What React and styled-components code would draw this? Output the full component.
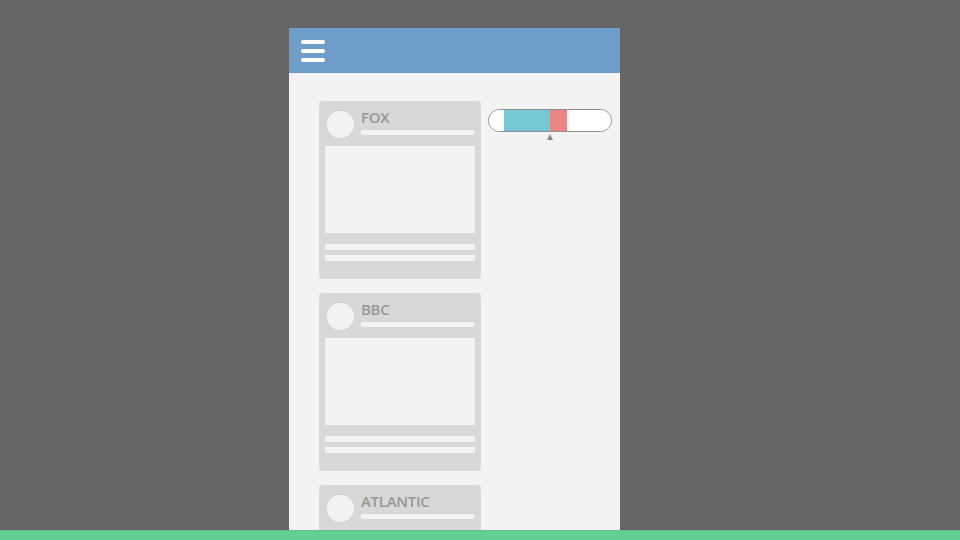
import React from "react";
import styled, { createGlobalStyle } from "styled-components";

const GlobalStyle = createGlobalStyle`
  html, body {
    margin: 0;
    padding: 0;
    background: #666666;
  }
  body {
    font-family: "Open Sans", "Liberation Sans", sans-serif;
  }
`;

const feeds = ["FOX", "BBC", "ATLANTIC"];

const Screen = () => {
  return (
    <Page>
      <GlobalStyle />
      <Stage>
        <Phone>
          <Header>
            <MenuButton aria-label="menu">
              <MenuLine />
              <MenuLine />
              <MenuLine />
            </MenuButton>
          </Header>
          <Body>
            <CardColumn>
              {feeds.map((name) => (
                <Card key={name}>
                  <CardHeader>
                    <Avatar />
                    <TitleBlock>
                      <Title>{name}</Title>
                      <TitleRule />
                    </TitleBlock>
                  </CardHeader>
                  <Picture />
                  <TextLine />
                  <TextLine />
                </Card>
              ))}
            </CardColumn>
            <Bias>
              <BiasBar>
                <BiasPart $w={15} $color="#ffffff" />
                <BiasPart $w={46} $color="#73c8d3" />
                <BiasPart $w={17} $color="#ea8585" />
                <BiasPart $grow $color="#ffffff" />
              </BiasBar>
              <Marker />
            </Bias>
          </Body>
        </Phone>
      </Stage>
      <BottomBar />
    </Page>
  );
};

const Page = styled.div`
  width: 960px;
  height: 540px;
  display: flex;
  flex-direction: column;
  overflow: hidden;
`;

const Stage = styled.div`
  flex: 1;
  min-height: 0;
  overflow: hidden;
  padding: 28px 0 0 289px;
`;

const Phone = styled.div`
  width: 331px;
  height: 100%;
  background: #f3f3f3;
  border-radius: 2px 2px 0 0;
  display: flex;
  flex-direction: column;
`;

const Header = styled.div`
  height: 45px;
  flex-shrink: 0;
  background: #6d9dc8;
  border-radius: 2px 2px 0 0;
  display: flex;
  align-items: center;
  padding-left: 12px;
`;

const MenuButton = styled.div`
  width: 24px;
  display: flex;
  flex-direction: column;
  gap: 5.5px;
  margin-top: 1px;
`;

const MenuLine = styled.span`
  display: block;
  height: 3.5px;
  background: #ffffff;
  border-radius: 2px;
`;

const Body = styled.div`
  display: flex;
  align-items: flex-start;
  gap: 7px;
  padding: 28px 0 0 30px;
`;

const CardColumn = styled.div`
  display: flex;
  flex-direction: column;
  gap: 14px;
`;

const Card = styled.div`
  width: 162px;
  box-sizing: border-box;
  background: #d8d8d8;
  border-radius: 4px;
  padding: 0 6px 18px;
`;

const CardHeader = styled.div`
  display: flex;
  align-items: flex-start;
  gap: 7px;
  padding: 9px 1px 8px 2px;
`;

const Avatar = styled.div`
  width: 27px;
  height: 27px;
  margin-top: 1px;
  flex-shrink: 0;
  border-radius: 50%;
  background: #f3f3f3;
`;

const TitleBlock = styled.div`
  flex: 1;
  display: flex;
  flex-direction: column;
`;

const Title = styled.div`
  font-size: 15px;
  line-height: 18px;
  font-weight: 600;
  color: #979797;
  letter-spacing: -0.3px;
  margin-top: -2px;
`;

const TitleRule = styled.div`
  height: 5px;
  margin-top: 4px;
  background: #f3f3f3;
`;

const Picture = styled.div`
  height: 87px;
  background: #f3f3f3;
`;

const TextLine = styled.div`
  height: 6px;
  margin-top: 11px;
  background: #f3f3f3;

  & + & {
    margin-top: 5px;
  }
`;

const Bias = styled.div`
  margin-top: 8px;
  display: flex;
  flex-direction: column;
`;

const BiasBar = styled.div`
  width: 124px;
  height: 23px;
  box-sizing: border-box;
  border: 1px solid #8e8e8e;
  border-radius: 12px;
  overflow: hidden;
  display: flex;
  background: #ffffff;
`;

const BiasPart = styled.div`
  width: ${(p) => (p.$grow ? "auto" : `${p.$w}px`)};
  flex: ${(p) => (p.$grow ? 1 : "none")};
  background: ${(p) => p.$color};
`;

const Marker = styled.div`
  width: 0;
  height: 0;
  margin: 2px 0 0 59px;
  border-left: 3.5px solid transparent;
  border-right: 3.5px solid transparent;
  border-bottom: 6px solid #8a8a8a;
`;

const BottomBar = styled.div`
  height: 10px;
  flex-shrink: 0;
  background: #62d095;
  border-top: 1px solid #5fbf8d;
  box-sizing: border-box;
`;

export default Screen;
